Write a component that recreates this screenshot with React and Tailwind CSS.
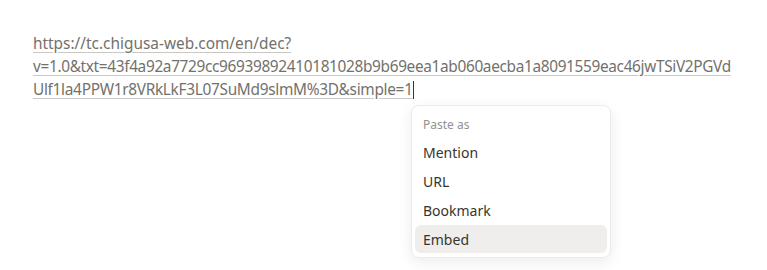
export default function App() {
  const font = { fontFamily: '"Segoe UI", "Noto Sans", "Open Sans", sans-serif' };
  return (
    <div className="relative w-[767px] h-[270px] bg-white overflow-hidden" style={font}>
      <div className="pt-8 pl-[33px] text-[15.4px] leading-[23px] text-[#72716c]">
        <div className="whitespace-nowrap">
          <span className="underline decoration-[#c9c8c5] underline-offset-[3px]">https://tc.chigusa-web.com/en/dec?</span>
        </div>
        <div className="whitespace-nowrap tracking-[-0.34px]">
          <span className="underline decoration-[#c9c8c5] underline-offset-[3px]">v=1.0&amp;txt=43f4a92a7729cc96939892410181028b9b69eea1ab060aecba1a8091559eac46jwTSiV2PGVd</span>
        </div>
        <div className="whitespace-nowrap flex items-center tracking-[-0.3px]">
          <span className="underline decoration-[#c9c8c5] underline-offset-[3px]">Ulf1la4PPW1r8VRkLkF3L07SuMd9slmM%3D&amp;simple=1</span>
          <span className="inline-block w-px h-[18px] bg-[#37352f]"></span>
        </div>
      </div>

      <div className="absolute left-[411px] top-[105px] w-[200px] rounded-[8px] bg-white border border-[#ecebea] shadow-[0_4px_14px_rgba(15,15,15,0.08)] px-[3px] pt-[3px] pb-[4px] flex flex-col gap-px">
        <div className="h-[28px] flex items-center pt-[4px] px-[8px] text-[12px] text-[#91918e]">Paste as</div>
        {["Mention", "URL", "Bookmark", "Embed"].map((t, i) => (
          <div
            key={t}
            className={`h-[28px] flex items-center px-[8px] rounded-[6px] text-[14px] text-[#37352f] ${i === 3 ? "bg-[#efeeec]" : ""}`}
          >
            {t}
          </div>
        ))}
      </div>
    </div>
  );
}
